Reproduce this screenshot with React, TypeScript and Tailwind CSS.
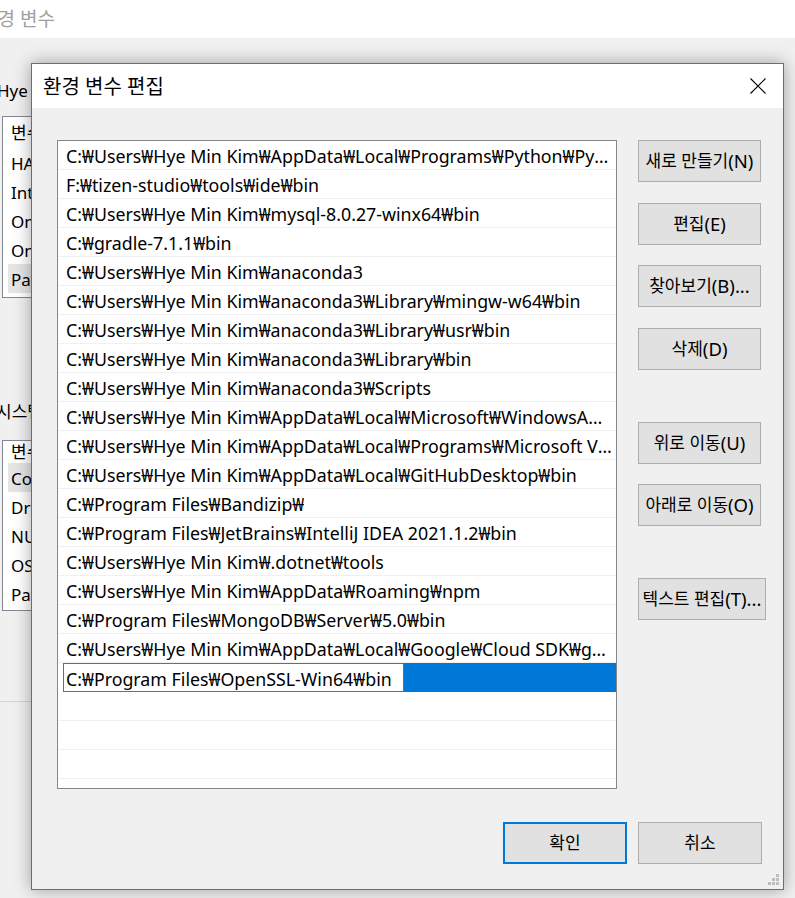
import React from 'react';

const paths = [
  'C:₩Users₩Hye Min Kim₩AppData₩Local₩Programs₩Python₩Python39₩Scripts₩',
  'F:₩tizen-studio₩tools₩ide₩bin',
  'C:₩Users₩Hye Min Kim₩mysql-8.0.27-winx64₩bin',
  'C:₩gradle-7.1.1₩bin',
  'C:₩Users₩Hye Min Kim₩anaconda3',
  'C:₩Users₩Hye Min Kim₩anaconda3₩Library₩mingw-w64₩bin',
  'C:₩Users₩Hye Min Kim₩anaconda3₩Library₩usr₩bin',
  'C:₩Users₩Hye Min Kim₩anaconda3₩Library₩bin',
  'C:₩Users₩Hye Min Kim₩anaconda3₩Scripts',
  'C:₩Users₩Hye Min Kim₩AppData₩Local₩Microsoft₩WindowsApps',
  'C:₩Users₩Hye Min Kim₩AppData₩Local₩Programs₩Microsoft VS Code₩bin',
  'C:₩Users₩Hye Min Kim₩AppData₩Local₩GitHubDesktop₩bin',
  'C:₩Program Files₩Bandizip₩',
  'C:₩Program Files₩JetBrains₩IntelliJ IDEA 2021.1.2₩bin',
  'C:₩Users₩Hye Min Kim₩.dotnet₩tools',
  'C:₩Users₩Hye Min Kim₩AppData₩Roaming₩npm',
  'C:₩Program Files₩MongoDB₩Server₩5.0₩bin',
  'C:₩Users₩Hye Min Kim₩AppData₩Local₩Google₩Cloud SDK₩google-cloud-sdk₩bin',
];

const userVars = ['HADOOP_HOME', 'IntelliJ IDEA', 'OneDrive', 'OneDriveConsumer', 'Path'];
const sysVars = ['ComSpec', 'DriverData', 'NUMBER_OF_PROCESSORS', 'OS', 'Path'];

// latin runs in the button labels are set a bit larger, like Malgun Gothic
function Label({ text }: { text: string }) {
  const parts = text.split(/([A-Za-z().]+)/).filter(Boolean);
  return (
    <>
      {parts.map((p, i) =>
        /^[A-Za-z().]+$/.test(p) ? (
          <span key={i} className="text-[18.5px]">
            {p}
          </span>
        ) : (
          <span key={i} className="whitespace-pre">{p}</span>
        )
      )}
    </>
  );
}

function WinButton({ label, wide, className = '' }: { label: string; wide?: boolean; className?: string }) {
  return (
    <div
      className={`${wide ? 'w-[128px]' : 'w-[123px]'} h-[42px] flex items-center justify-center border border-[#adadad] bg-[#e1e1e1] text-[17px] text-black whitespace-nowrap ${className}`}
    >
      <Label text={label} />
    </div>
  );
}

export default function App() {
  return (
    <div
      className="relative w-[795px] h-[898px] bg-[#f0f0f0] overflow-hidden text-black"
      style={{ fontFamily: '"Noto Sans", "Noto Sans CJK KR", sans-serif' }}
    >
      {/* background window */}
      <div className="h-[38px] bg-white flex items-center">
        <span className="ml-[-20px] text-[19px] text-[#a0a0a0] whitespace-nowrap">환경 변수</span>
      </div>
      <div className="ml-[-3px] mt-[43px] text-[17px] leading-[20px] whitespace-nowrap">Hye Min Kim에 대한 사용자 변수(U)</div>

      <div className="ml-[2px] mt-[15px] w-[400px] h-[182px] border border-[#828790] bg-white text-[17px] overflow-hidden">
        <div className="h-[31px] flex items-center pl-[8px]">변수</div>
        {userVars.map((v, i) => (
          <div
            key={v}
            className={`h-[29px] flex items-center ml-[5px] pl-[3px] pt-[2px] whitespace-nowrap ${i === userVars.length - 1 ? 'bg-[#e5e5e5]' : ''}`}
          >
            {v}
          </div>
        ))}
      </div>

      <div className="ml-[-4px] mt-[104px] text-[17px] leading-[20px] whitespace-nowrap">시스템 변수(S)</div>

      <div className="ml-[2px] mt-[18px] w-[400px] h-[171px] border border-[#828790] bg-white text-[17px] overflow-hidden">
        <div className="h-[22px] flex items-center pl-[8px]">변수</div>
        {sysVars.map((v, i) => (
          <div
            key={v}
            className={`h-[29px] flex items-center ml-[5px] pl-[3px] pt-[2px] whitespace-nowrap ${i === 0 ? 'bg-[#e5e5e5]' : ''}`}
          >
            {v}
          </div>
        ))}
      </div>

      <div className="mt-[90px] h-px w-[400px] bg-[#d5d5d5]" />

      {/* edit dialog */}
      <div className="absolute left-[31px] top-[63px] w-[753px] h-[827px] border border-[#6d6d6d] bg-[#f0f0f0] shadow-[0_0_16px_rgba(0,0,0,0.35)] flex flex-col">
        <div className="h-[44px] bg-white flex items-center justify-between pl-[11px] pr-[17px]">
          <span className="text-[20px] pt-[2px]">환경 변수 편집</span>
          <svg width="16" height="16" viewBox="0 0 16 16" fill="none" stroke="#000" strokeWidth="1.1">
            <path d="M0.5 0.5 L15.5 15.5 M15.5 0.5 L0.5 15.5" />
          </svg>
        </div>

        <div className="flex pl-[25px] pt-[32px]">
          <div className="w-[560px] h-[649px] border border-[#828790] bg-white overflow-hidden text-[17.8px]">
            {paths.map((p) => (
              <div key={p} className="h-[29px] border-b border-[#f0f0f0] flex items-center pl-[8px] pr-[4px] pt-[3px]">
                <span className="truncate">{p}</span>
              </div>
            ))}
            <div className="h-[29px] flex">
              <div className="w-[341px] h-[29px] ml-[5px] border border-[#6d6d6d] bg-white flex items-center pl-[2px] pt-[3px] whitespace-nowrap">
                C:₩Program Files₩OpenSSL-Win64₩bin
              </div>
              <div className="flex-1 bg-[#0078d7]" />
            </div>
            {[0, 1, 2, 3].map((i) => (
              <div key={i} className="h-[29px] border-b border-[#f0f0f0]" />
            ))}
          </div>

          <div className="ml-[21px] flex flex-col">
            <WinButton label="새로 만들기(N)" />
            <WinButton label="편집(E)" className="mt-[21px]" />
            <WinButton label="찾아보기(B)..." className="mt-[20px]" />
            <WinButton label="삭제(D)" className="mt-[21px]" />
            <WinButton label="위로 이동(U)" className="mt-[52px]" />
            <WinButton label="아래로 이동(O)" className="mt-[20px]" />
            <WinButton label="텍스트 편집(T)..." wide className="mt-[52px]" />
          </div>
        </div>

        <div className="flex justify-end gap-[11px] pr-[21px] mt-[33px]">
          <div className="w-[124px] h-[42px] flex items-center justify-center border-2 border-[#0078d7] bg-[#e1e1e1] text-[17px]">
            확인
          </div>
          <WinButton label="취소" className="w-[124px]" />
        </div>

        <svg className="absolute right-[3px] bottom-[3px]" width="12" height="12" viewBox="0 0 12 12" fill="#bdbdbd">
          <rect x="8" y="0" width="3" height="3" />
          <rect x="4" y="4" width="3" height="3" />
          <rect x="8" y="4" width="3" height="3" />
          <rect x="0" y="8" width="3" height="3" />
          <rect x="4" y="8" width="3" height="3" />
          <rect x="8" y="8" width="3" height="3" />
        </svg>
      </div>
    </div>
  );
}
